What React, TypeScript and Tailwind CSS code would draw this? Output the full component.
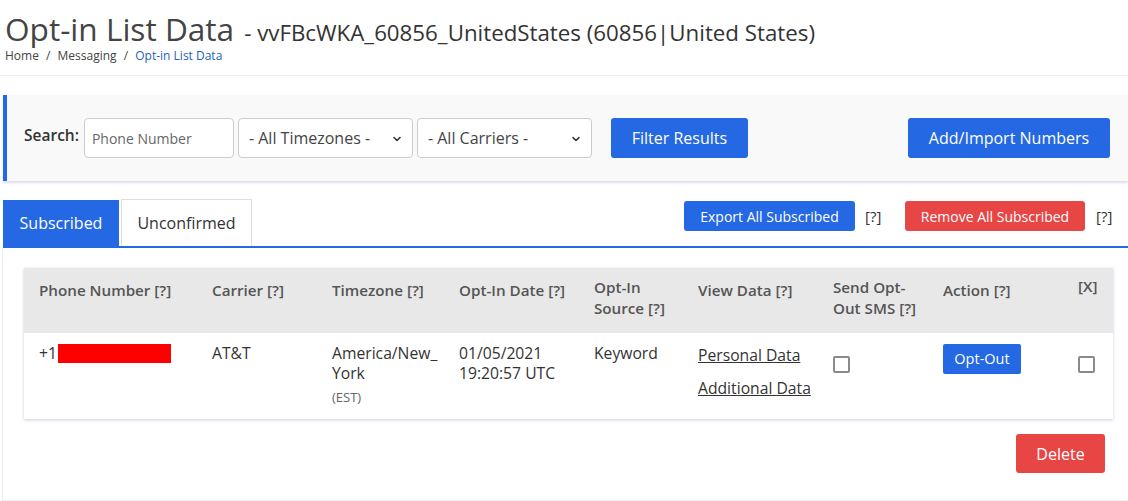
import React from "react";

const F = { fontFamily: '"Open Sans", "Noto Sans", sans-serif' };

function Chevron() {
  return (
    <svg width="10" height="10" viewBox="0 0 10 10" className="absolute right-[10px] top-[15px]">
      <path d="M2 3.5 L5 6.5 L8 3.5" fill="none" stroke="#333" strokeWidth="1.6" strokeLinecap="round" strokeLinejoin="round" />
    </svg>
  );
}

function Select({ label, w }: { label: string; w: string }) {
  return (
    <div className={`relative h-[40px] ${w} bg-white border border-[#ccc] rounded-[4px] flex items-center pl-[10px] text-[16px] text-[#444]`}>
      {label}
      <Chevron />
    </div>
  );
}

function Checkbox() {
  return <div className="w-[17px] h-[17px] border-2 border-[#8a8a8a] rounded-[2px] bg-white" />;
}

export default function App() {
  const headers: { t: React.ReactNode; w: number; pt: number }[] = [
    { t: "Phone Number [?]", w: 173, pt: 12 },
    { t: "Carrier [?]", w: 120, pt: 12 },
    { t: "Timezone [?]", w: 127, pt: 12 },
    { t: "Opt-In Date [?]", w: 135, pt: 12 },
    { t: <>Opt-In<br />Source [?]</>, w: 104, pt: 9 },
    { t: "View Data [?]", w: 135, pt: 12 },
    { t: <>Send Opt-<br />Out SMS [?]</>, w: 110, pt: 9 },
    { t: "Action [?]", w: 135, pt: 12 },
    { t: "[X]", w: 50, pt: 8 },
  ];
  return (
    <div style={F} className="w-[1128px] h-[501px] bg-white text-[#333] overflow-hidden">
      {/* Header */}
      <div className="px-[5px] pt-[13px] border-b border-[#eee] h-[76px]">
        <div className="flex items-baseline whitespace-nowrap h-[32px]">
          <span className="text-[31.6px] leading-[32px] text-[#444]">Opt-in List Data</span>
          <span className="text-[22.3px] leading-[32px] text-[#333] ml-[10px]">- vvFBcWKA_60856_UnitedStates (60856|United States)</span>
        </div>
        <div className="text-[12px] leading-[16px] mt-[3px] text-[#444]">
          Home <span className="mx-[4px]">/</span> Messaging <span className="mx-[4px]">/</span>{" "}
          <span className="text-[#1e5fb8]">Opt-in List Data</span>
        </div>
      </div>

      {/* Filter panel */}
      <div className="mt-[19px] ml-[3px] h-[86px] bg-[#f9f9f9] border-l-[4px] border-[#2468e4] shadow-[0_2px_2px_rgba(200,200,230,0.6)] flex items-center pl-[17px] pr-[18px]">
        <span className="text-[15.5px] font-semibold text-[#333] mr-[5px] -mt-[4px]">Search:</span>
        <div className="h-[40px] w-[150px] bg-white border border-[#ccc] rounded-[4px] flex items-center pl-[7px] text-[14px] text-[#666]">
          Phone Number
        </div>
        <div className="ml-[4px]"><Select label="- All Timezones -" w="w-[175px]" /></div>
        <div className="ml-[4px]"><Select label="- All Carriers -" w="w-[175px]" /></div>
        <button className="ml-[19px] h-[40px] w-[137px] bg-[#2468e4] text-white text-[16px] rounded-[3px]">Filter Results</button>
        <div className="flex-1" />
        <button className="h-[40px] w-[202px] bg-[#2468e4] text-white text-[16px] rounded-[3px]">Add/Import Numbers</button>
      </div>

      {/* Tabs */}
      <div className="mt-[19px] ml-[3px] flex items-end border-b-[2px] border-[#2468e4] h-[48px]">
        <div className="h-[46px] w-[116px] bg-[#2468e4] text-white text-[16px] flex items-center justify-center">Subscribed</div>
        <div className="h-[47px] w-[131px] ml-[2px] bg-white border border-b-0 border-[#ddd] text-[16px] text-[#333] flex items-center justify-center">Unconfirmed</div>
        <div className="flex-1" />
        <div className="self-start mt-[1px] flex items-center">
          <button className="h-[30px] w-[171px] bg-[#2468e4] text-white text-[14px] rounded-[3px]">Export All Subscribed</button>
          <span className="text-[15px] ml-[10px] w-[18px]">[?]</span>
          <button className="ml-[22px] h-[30px] w-[180px] bg-[#e84545] text-white text-[14px] rounded-[3px]">Remove All Subscribed</button>
          <span className="text-[15px] ml-[11px] w-[18px] mr-[14px]">[?]</span>
        </div>
      </div>

      {/* Content */}
      <div className="ml-[2px] border-l border-b border-[#eee] h-[253px] pt-[20px] pl-[21px] pr-[16px]">
        <table className="border-collapse table-fixed w-[1089px] shadow-[0_1px_3px_rgba(180,180,210,0.7)]">
          <thead>
            <tr className="bg-[#e8e8e8] h-[65px]">
              {headers.map((h, i) => (
                <th
                  key={i}
                  style={{ width: h.w, paddingTop: h.pt }}
                  className="align-top text-left font-semibold text-[15.2px] leading-[21px] text-[#555] px-[15px] whitespace-nowrap"
                >
                  {h.t}
                </th>
              ))}
            </tr>
          </thead>
          <tbody>
            <tr className="h-[86px] bg-white text-[15.7px] leading-[20px] text-[#333]">
              <td className="align-top pt-[10px] px-[15px]">
                <div className="flex items-center">
                  +1<span className="inline-block w-[113px] h-[19px] bg-[#ff0000] ml-[1px]" />
                </div>
              </td>
              <td className="align-top pt-[10px] px-[15px]">AT&amp;T</td>
              <td className="align-top pt-[10px] pl-[15px] pr-0 whitespace-nowrap">
                America/New_<br />York
                <div className="text-[13px] text-[#666] mt-[4px]">(EST)</div>
              </td>
              <td className="align-top pt-[10px] px-[15px] whitespace-nowrap">01/05/2021<br />19:20:57 UTC</td>
              <td className="align-top pt-[10px] px-[15px]">Keyword</td>
              <td className="align-top pt-[12px] px-[15px] whitespace-nowrap">
                <div className="underline">Personal Data</div>
                <div className="underline mt-[13px]">Additional Data</div>
              </td>
              <td className="align-top pt-[23px] px-[15px]"><Checkbox /></td>
              <td className="align-top pt-[11px] px-[15px]">
                <button className="h-[30px] w-[78px] bg-[#2468e4] text-white text-[14.5px] rounded-[2px]">Opt-Out</button>
              </td>
              <td className="align-top pt-[23px] px-[15px]"><Checkbox /></td>
            </tr>
          </tbody>
        </table>
        <div className="flex justify-end mt-[15px] pr-[7px]">
          <button className="h-[39px] w-[89px] bg-[#e84545] text-white text-[16px] rounded-[3px]">Delete</button>
        </div>
      </div>
    </div>
  );
}
